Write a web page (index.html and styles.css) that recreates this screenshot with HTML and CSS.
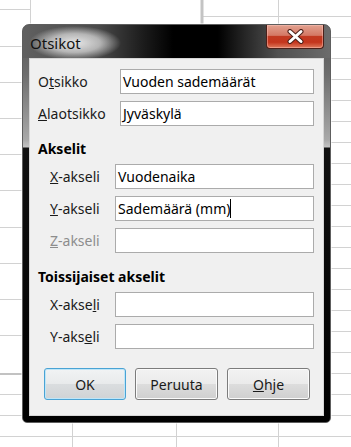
FILE: index.html
```html
<!DOCTYPE html>
<html lang="fi">
<head>
    <meta charset="UTF-8">
    <meta name="viewport" content="width=device-width, initial-scale=1.0">
    <title>Otsikot</title>
    <link rel="stylesheet" href="styles.css">
</head>
<body>

    <div class="desk">
        <!-- Taustalla oleva taulukko -->
        <svg class="sheet" width="351" height="447" viewBox="0 0 351 447">
            <g stroke="#d2d2d2" stroke-width="1">
                <line x1="0" y1="9.5" x2="30" y2="9.5"/>
                <line x1="30.5" y1="0" x2="30.5" y2="24"/>
                <line x1="278.5" y1="0" x2="278.5" y2="24"/>
                <line x1="203" y1="16.5" x2="351" y2="16.5"/>
                <line x1="0" y1="46.5" x2="22" y2="46.5"/>
                <line x1="0" y1="82.5" x2="22" y2="82.5"/>
                <line x1="0" y1="118.5" x2="22" y2="118.5"/>
                <line x1="0" y1="154.5" x2="22" y2="154.5"/>
                <line x1="0" y1="190.5" x2="22" y2="190.5"/>
                <line x1="0" y1="227.5" x2="22" y2="227.5"/>
                <line x1="0" y1="263.5" x2="22" y2="263.5"/>
                <line x1="0" y1="299.5" x2="22" y2="299.5"/>
                <line x1="0" y1="335.5" x2="22" y2="335.5"/>
                <line x1="0" y1="394.5" x2="22" y2="394.5"/>
                <line x1="0" y1="415.5" x2="22" y2="415.5"/>
                <line x1="0" y1="436.5" x2="351" y2="436.5"/>
                <line x1="72.5" y1="423" x2="72.5" y2="447"/>
                <line x1="176.5" y1="423" x2="176.5" y2="447"/>
                <line x1="278.5" y1="423" x2="278.5" y2="447"/>
            </g>
            <g stroke="#d2d2d2" stroke-width="1">
                <line x1="331" y1="37.5" x2="351" y2="37.5"/>
                <line x1="331" y1="58.5" x2="351" y2="58.5"/>
                <line x1="331" y1="79.5" x2="351" y2="79.5"/>
                <line x1="331" y1="100.5" x2="351" y2="100.5"/>
                <line x1="331" y1="121.5" x2="351" y2="121.5"/>
                <line x1="331" y1="142.5" x2="351" y2="142.5"/>
                <line x1="331" y1="163.5" x2="351" y2="163.5"/>
                <line x1="331" y1="184.5" x2="351" y2="184.5"/>
                <line x1="331" y1="205.5" x2="351" y2="205.5"/>
                <line x1="331" y1="226.5" x2="351" y2="226.5"/>
                <line x1="331" y1="247.5" x2="351" y2="247.5"/>
                <line x1="331" y1="268.5" x2="351" y2="268.5"/>
                <line x1="331" y1="289.5" x2="351" y2="289.5"/>
                <line x1="331" y1="310.5" x2="351" y2="310.5"/>
                <line x1="331" y1="331.5" x2="351" y2="331.5"/>
                <line x1="331" y1="352.5" x2="351" y2="352.5"/>
                <line x1="331" y1="373.5" x2="351" y2="373.5"/>
                <line x1="331" y1="394.5" x2="351" y2="394.5"/>
                <line x1="331" y1="415.5" x2="351" y2="415.5"/>
            </g>
            <line x1="202" y1="0" x2="202" y2="24" stroke="#c4c4c4" stroke-width="3"/>
            <line x1="0" y1="374" x2="22" y2="374" stroke="#c2c2c2" stroke-width="2"/>
        </svg>

        <!-- Otsikot-ikkuna -->
        <div class="dialog">
            <div class="titlebar">
                <span class="title">Otsikot</span>
                <div class="close">
                    <svg width="17" height="15" viewBox="0 0 17 15">
                        <path d="M3 2.5 L14 12.5 M14 2.5 L3 12.5" stroke="#4a1f18" stroke-width="5" stroke-linecap="round"/>
                        <path d="M3 2.5 L14 12.5 M14 2.5 L3 12.5" stroke="#ffffff" stroke-width="3" stroke-linecap="round"/>
                    </svg>
                </div>
            </div>

            <div class="client">
                <div class="rows rows-main">
                    <span class="label">O<u>t</u>sikko</span>
                    <div class="field">Vuoden sademäärät</div>
                    <span class="label"><u>A</u>laotsikko</span>
                    <div class="field">Jyväskylä</div>
                </div>

                <h3>Akselit</h3>
                <div class="rows rows-axes">
                    <span class="label"><u>X</u>-akseli</span>
                    <div class="field">Vuodenaika</div>
                    <span class="label"><u>Y</u>-akseli</span>
                    <div class="field">Sademäärä (mm)<span class="caret"></span></div>
                    <span class="label disabled"><u>Z</u>-akseli</span>
                    <div class="field"></div>
                </div>

                <h3 class="second">Toissijaiset akselit</h3>
                <div class="rows rows-axes">
                    <span class="label">X-akse<u>l</u>i</span>
                    <div class="field"></div>
                    <span class="label">Y-aks<u>e</u>li</span>
                    <div class="field"></div>
                </div>

                <div class="buttons">
                    <button class="btn default">OK</button>
                    <button class="btn">Peruuta</button>
                    <button class="btn"><u>O</u>hje</button>
                </div>
            </div>
        </div>
    </div>

</body>
</html>
```

FILE: styles.css
```css
body {
    margin: 0;
    background: #ffffff;
    font-family: "Noto Sans", "Open Sans", sans-serif;
    font-size: 14px;
    color: #1a1a1a;
}
.desk {
    position: relative;
    width: 351px;
    height: 447px;
    overflow: hidden;
}
.sheet {
    display: block;
}
.dialog {
    position: absolute;
    left: 22px;
    top: 24px;
    width: 309px;
    height: 399px;
    box-sizing: border-box;
    border: 1px solid #5e5e5e;
    border-radius: 7px 7px 5px 5px;
    padding: 0 6px 6px;
    display: flex;
    flex-direction: column;
    background: linear-gradient(to bottom, #555 0, #6e6e6e 50px, #a9a9a9 115px, #c3c3c3 122px, #111 123px, #000 100%);
    box-shadow: 0 0 0 1px rgba(255, 255, 255, 0.5);
}
.titlebar {
    position: relative;
    height: 33px;
    margin: 0 -6px;
    padding: 2px 0 0 7px;
    box-sizing: border-box;
    display: flex;
    align-items: center;
    border-radius: 6px 6px 0 0;
    background:
        radial-gradient(ellipse 46px 17px at 52px 18px, rgba(238, 238, 238, 0.95) 0%, rgba(215, 215, 215, 0.75) 55%, rgba(200, 200, 200, 0) 100%),
        linear-gradient(to right, #606060 0, #4a4a4a 75px, #1c1c1c 120px, #000 150px, #000 195px, #262626 222px, #505050 255px, #6c6c6c 100%);
}
.title {
    color: #121212;
    font-size: 15px;
}
.close {
    position: absolute;
    top: 0;
    right: 6px;
    width: 58px;
    height: 24px;
    box-sizing: border-box;
    border: 1px solid #4b2019;
    border-top: none;
    border-radius: 0 0 4px 4px;
    display: flex;
    align-items: center;
    justify-content: center;
    background: linear-gradient(to bottom, #e2a290 0, #d47865 45%, #c23a22 50%, #c4351d 75%, #de7a5c 100%);
    box-shadow: inset 0 0 0 1px rgba(255, 200, 190, 0.45);
}
.client {
    flex: 1;
    background: #f0f0f0;
    border: 1px solid #d6d6d6;
    padding: 10px 9px 0 8px;
}
.rows {
    display: grid;
    row-gap: 7px;
    grid-auto-rows: 25px;
    align-items: center;
}
.rows-main {
    grid-template-columns: 82px 1fr;
}
.rows-axes {
    grid-template-columns: 65px 1fr;
    padding-left: 12px;
}
.label {
    white-space: nowrap;
}
.label.disabled {
    color: #8d8d8d;
}
.field {
    height: 25px;
    box-sizing: border-box;
    border: 1px solid #ababab;
    background: #fff;
    padding: 0 2px;
    line-height: 23px;
    color: #000;
    white-space: nowrap;
}
.caret {
    display: inline-block;
    width: 1px;
    height: 19px;
    background: #000;
    vertical-align: -4px;
}
h3 {
    margin: 14px 0 6px;
    font-size: 14px;
    line-height: 18px;
    font-weight: bold;
    color: #000;
}
h3.second {
    margin-top: 15px;
}
.buttons {
    display: flex;
    gap: 9px;
    margin: 19px 0 0 6px;
}
.btn {
    width: 83px;
    height: 32px;
    font-family: inherit;
    font-size: 14px;
    color: #1a1a1a;
    border: 1px solid #7c7c7c;
    border-radius: 3px;
    background: linear-gradient(to bottom, #f2f2f2 0, #ebebeb 50%, #dddddd 50%, #cfcfcf 100%);
    box-shadow: inset 0 0 0 1px #fbfbfb;
    padding: 0;
}
.btn.default {
    width: 82px;
    border-color: #4aa3d4;
    background: linear-gradient(to bottom, #f1f3f4 0, #e8eaeb 50%, #dadddf 50%, #d0d3d5 100%);
    box-shadow: inset 0 0 0 1px #bfe6f8;
}
```
